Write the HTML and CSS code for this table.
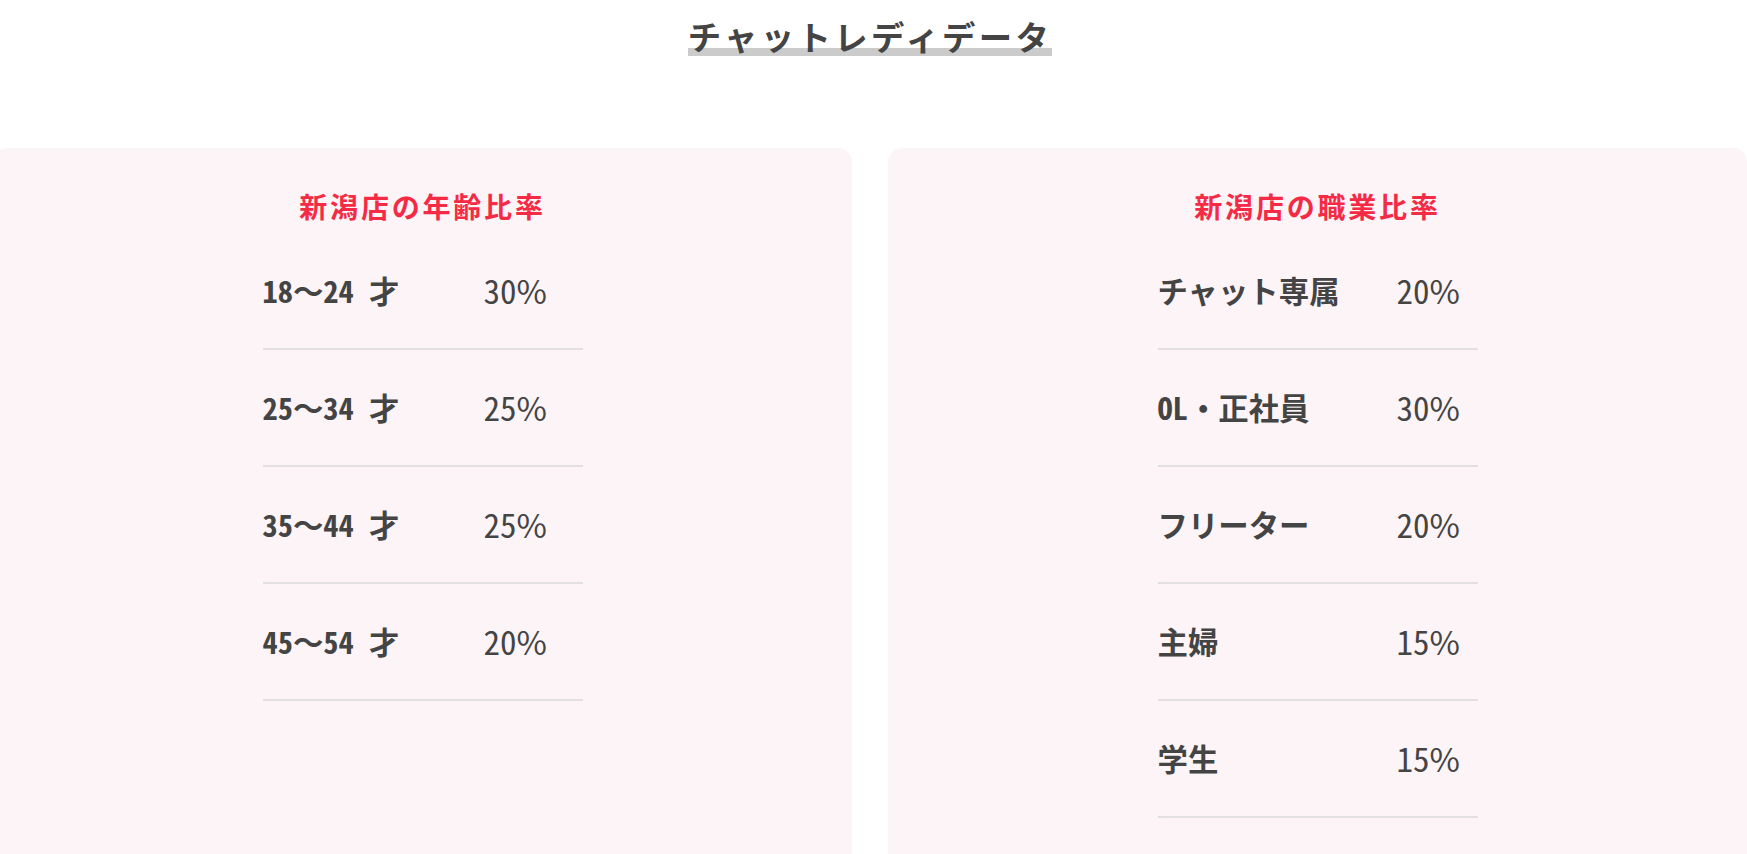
FILE: index.html
```html
<!DOCTYPE html>
<html lang="ja">
<head>
<meta charset="utf-8">
<title>チャットレディデータ</title>
<link rel="stylesheet" href="styles.css">
</head>
<body>
<div class="page">
  <h1 class="title"><span class="title-text">チャットレディデータ</span></h1>
  <div class="cards">
    <section class="card">
      <h2 class="card-title">新潟店の年齢比率</h2>
      <table class="ratio ratio-age">
        <tr><th>18<span class="fw">〜</span>24 才</th><td>30<span class="fw">%</span></td></tr>
        <tr><th>25<span class="fw">〜</span>34 才</th><td>25<span class="fw">%</span></td></tr>
        <tr><th>35<span class="fw">〜</span>44 才</th><td>25<span class="fw">%</span></td></tr>
        <tr><th>45<span class="fw">〜</span>54 才</th><td>20<span class="fw">%</span></td></tr>
      </table>
    </section>
    <section class="card">
      <h2 class="card-title">新潟店の職業比率</h2>
      <table class="ratio ratio-job">
        <tr><th>チャット専属</th><td>20<span class="fw">%</span></td></tr>
        <tr><th>OL・正社員</th><td>30<span class="fw">%</span></td></tr>
        <tr><th>フリーター</th><td>20<span class="fw">%</span></td></tr>
        <tr><th>主婦</th><td>15<span class="fw">%</span></td></tr>
        <tr><th>学生</th><td>15<span class="fw">%</span></td></tr>
      </table>
    </section>
  </div>
</div>
</body>
</html>
```

FILE: styles.css
```css
html, body {
  margin: 0;
  padding: 0;
  background: #ffffff;
  overflow: hidden;
}

.page {
  width: 1754px;
  margin-left: -7px;
  font-family: "Noto Sans CJK JP", sans-serif;
  color: #444444;
}

.title {
  margin: 0;
  padding-top: 11px;
  text-align: center;
  font-size: 33.4px;
  line-height: 50px;
  font-weight: 700;
  letter-spacing: 0.1em;
  color: #444444;
}

.title-text {
  background: linear-gradient(transparent 75%, #cbcbcb 75%, #cbcbcb 92%, transparent 92%);
}

.cards {
  margin-top: 87px;
  display: grid;
  grid-template-columns: 1fr 1fr;
  gap: 36px;
}

.card {
  background: #fdf4f7;
  border-radius: 14px;
  padding-top: 37px;
  min-height: 720px;
}

.card-title {
  margin: 0 0 6px;
  text-align: center;
  font-size: 28px;
  line-height: 42px;
  font-weight: 700;
  letter-spacing: 0.1em;
  color: #f52a45;
}

.ratio {
  margin: 0 auto;
  width: 320px;
  border-collapse: separate;
  border-spacing: 0;
}

.ratio th,
.ratio td {
  padding: 35px 0;
  line-height: 45px;
  border-bottom: 2px solid #e2e0e1;
  text-align: left;
  vertical-align: middle;
  white-space: nowrap;
  color: #444444;
  font-family: "Noto Sans CJK JP", sans-serif;
  font-feature-settings: "hwid" 1;
}

.ratio .fw {
  font-feature-settings: normal;
}

.ratio th {
  font-weight: 700;
}

.ratio td {
  font-weight: 400;
  font-size: 33px;
}

.ratio-age th {
  width: 221px;
  font-size: 30.4px;
}

.ratio-job th {
  width: 239px;
  font-size: 30.4px;
}
```
